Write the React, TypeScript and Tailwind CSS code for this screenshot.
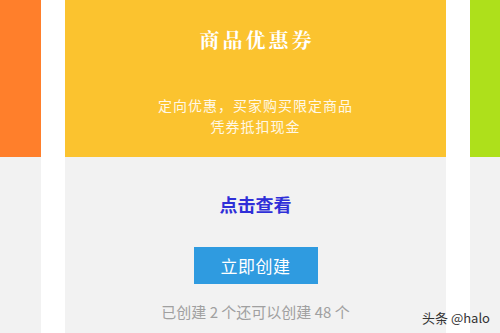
import React from "react";

const sans = '"Noto Sans CJK SC", "Noto Sans", sans-serif';
const serif = '"Noto Serif CJK SC", "Liberation Serif", "Noto Sans CJK SC", serif';

export default function App() {
  return (
    <div className="relative w-[500px] h-[333px] overflow-hidden bg-white flex gap-[24px]" style={{ fontFamily: sans }}>
      <div className="w-[41px] flex flex-col shrink-0">
        <div className="h-[157px] bg-[#ff7f2b]" />
        <div className="flex-1 bg-[#f2f2f2]" />
      </div>
      <div className="w-[381px] flex flex-col shrink-0">
        <div className="h-[157px] bg-[#fbc32f] flex flex-col items-center text-white">
          <div
            className="mt-[26px] text-[20px] leading-[28px] font-bold tracking-[3px] pl-[3px]"
            style={{ fontFamily: serif }}
          >
            商品优惠券
          </div>
          <div className="mt-[41px] text-[14px] leading-[21px] tracking-[1px] text-center text-[#fff8e6]">
            <div>定向优惠，买家购买限定商品</div>
            <div>凭券抵扣现金</div>
          </div>
        </div>
        <div className="flex-1 bg-[#f2f2f2] flex flex-col items-center">
          <div className="mt-[34px] text-[18px] leading-[26px] font-bold text-[#2f2fd8]">点击查看</div>
          <div className="mt-[30px] w-[124px] h-[37px] bg-[#2f9be0] text-white text-[17px] flex items-center justify-center tracking-[0.5px]">
            立即创建
          </div>
          <div className="mt-[18px] text-[15px] leading-[20px] text-[#a0a0a0]">已创建 2 个还可以创建 48 个</div>
        </div>
      </div>
      <div className="flex-1 flex flex-col">
        <div className="h-[157px] bg-[#aee01b]" />
        <div className="flex-1 bg-[#f2f2f2]" />
      </div>
      <div className="absolute left-[422px] top-[309px] text-[13px] leading-[18px] text-[#333333] whitespace-nowrap">
        头条 @halo
      </div>
    </div>
  );
}
